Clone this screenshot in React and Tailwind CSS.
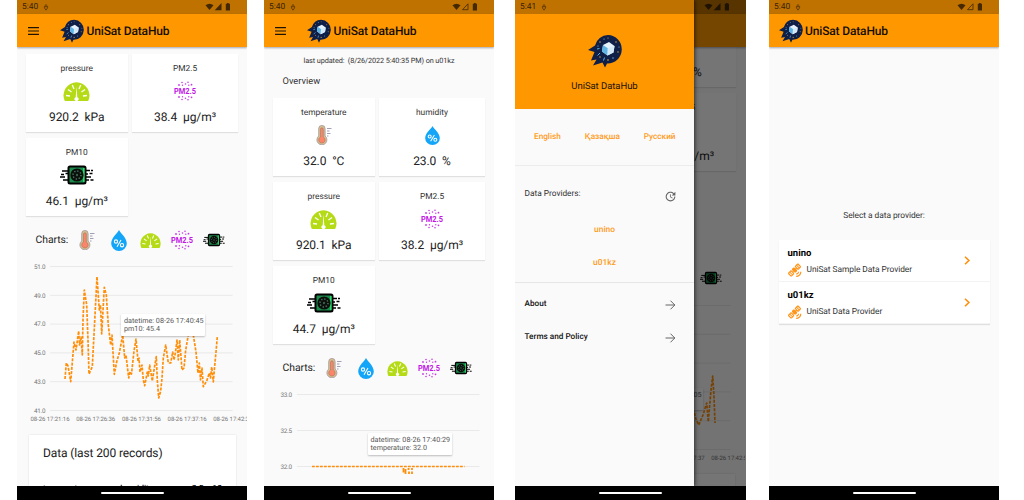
import React from "react";
import { MdUpdate, MdSatelliteAlt } from "react-icons/md";

function Logo({ className }) {
  return (
    <svg viewBox="0 0 34 34" className={className}>
      <path d="M20 1A14 14 0 1 1 19 29.500L17 33.500L14.500 28.500L5 31.500L8.500 25.500L3 26.500L6.500 18L0 16L7 11.500A14 14 0 0 1 20 1Z" fill="#0f1f47" />
      <path d="M15 11L21 8L26.500 12L25.500 18.500L19.500 21.500L14 17.500Z" fill="#e6f2fb" />
      <path d="M15 11L19.800 14.300L19.500 21.500L14 17.500Z" fill="#5fb4e6" />
      <path d="M19.800 14.300L26.500 12L25.500 18.500L19.500 21.500Z" fill="#d5e8f6" />
      <path d="M9.500 21.500L12 19M15.500 26.500L16.500 23.500M9 15L11.500 14.500" stroke="#53b5e8" strokeWidth="1" />
      <g fill="#e8b04a">
        <circle cx="12" cy="8" r=".7" /><circle cx="28" cy="8" r=".7" /><circle cx="30" cy="18" r=".7" />
        <circle cx="20" cy="26" r=".8" /><circle cx="12" cy="23" r=".7" /><circle cx="20" cy="4" r=".6" />
      </g>
      <g fill="#7cc4ee">
        <circle cx="16" cy="5" r=".6" /><circle cx="25" cy="24" r=".7" /><circle cx="31" cy="13" r=".6" /><circle cx="10" cy="12" r=".6" />
      </g>
    </svg>
  );
}

function Thermo({ className }) {
  return (
    <svg viewBox="0 0 16 20" className={className}>
      <path d="M2.700 11V3.600a3.200 3.200 0 0 1 6.400 0V11a5 5 0 1 1-6.400 0Z" fill="#d8c08c" stroke="#a396a0" strokeWidth=".8" />
      <path d="M4.500 12V4.200a1.400 1.400 0 0 1 2.800 0V12a3.200 3.200 0 1 1-2.800 0Z" fill="#fb8469" stroke="#8f7466" strokeWidth=".5" />
      <path d="M11 3.500h4.500M11 6h2.500M11 8.500h3.500M11 11h1.500" stroke="#8b86a6" strokeWidth=".8" />
    </svg>
  );
}

function Drop({ className }) {
  return (
    <svg viewBox="0 0 16 20" className={className} preserveAspectRatio="none">
      <path d="M8 0C9.500 3 15.800 7.500 15.800 12.800a7.800 7.200 0 0 1-15.600 0C.200 7.500 6.500 3 8 0Z" fill="#12a5f8" />
      <g fill="none" stroke="#fff" strokeWidth="1.100">
        <circle cx="5" cy="11" r="1.600" /><circle cx="11" cy="14.500" r="1.600" /><path d="M10 9.500L6 16" />
      </g>
    </svg>
  );
}

function Gauge({ className }) {
  return (
    <svg viewBox="0 0 27 19" className={className}>
      <path d="M1.800 19A13 13 0 1 1 25.200 19Q24.800 19 24 19H3Q2 19 1.800 19Z" fill="#b5db17" />
      <path d="M3 13.500l4 .5M5 7.500l3.500 2.500M9.300 3l1.700 4M24 13.500l-4 .5M22 7.500L18.500 10M17.700 3L16 7" stroke="#fff" strokeWidth="1.300" />
      <path d="M13.500 4.500L14.300 15.300A2 2 0 1 1 12.700 15.300Z" fill="#fff" />
    </svg>
  );
}

function Pm25({ className }) {
  return (
    <svg viewBox="0 0 22 20" className={className}>
      <text x="0" y="13" textLength="22" lengthAdjust="spacingAndGlyphs" fontFamily="Roboto, sans-serif" fontWeight="700" fontSize="8.500" fill="#c217e6">PM2.5</text>
      <g fill="#c63be8">
        <circle cx="5" cy="4" r=".9" /><circle cx="8" cy="1.500" r=".8" /><circle cx="8.500" cy="4.300" r=".7" /><circle cx="11.500" cy="3" r=".8" />
        <circle cx="14" cy="1.300" r=".8" /><circle cx="14.800" cy="4.300" r=".7" /><circle cx="17.500" cy="3.700" r=".9" />
        <circle cx="5" cy="16" r=".9" /><circle cx="8" cy="18.500" r=".8" /><circle cx="8.500" cy="15.700" r=".7" /><circle cx="11.500" cy="17.200" r=".8" />
        <circle cx="14" cy="18.700" r=".8" /><circle cx="14.800" cy="15.700" r=".7" /><circle cx="17.500" cy="16.300" r=".9" />
      </g>
    </svg>
  );
}

function Pm10({ className }) {
  return (
    <svg viewBox="0 0 34 20" className={className}>
      <path d="M2 6h6M1 9.500h3M5.500 8.500h3M0 12h5M3 15h5M26 5.500h4M31 5.500h2M25 9h3M29.500 8.500h3M26 12h5M26 15h3M30.500 15h3" stroke="#000" strokeWidth="1.500" />
      <rect x="8.500" y="1.500" width="17" height="17" rx="1.500" fill="#1c8a4a" stroke="#000" strokeWidth="2" />
      <path d="M23.800 3v14" stroke="#27e070" strokeWidth="1.500" />
      <circle cx="17" cy="10" r="6.600" fill="#0a0f0c" />
      <circle cx="17" cy="10" r="4" fill="none" stroke="#4f7460" strokeWidth="1.400" strokeDasharray="1.300 1.800" />
      <circle cx="17" cy="10" r="1.200" fill="#3c5a48" />
    </svg>
  );
}

function StatusBar({ time, outlined }) {
  return (
    <div className="flex h-[14px] shrink-0 items-center bg-[#bf7200] pr-[15px] pl-[5px] text-[#3b2300]">
      {time && <span className="pt-px text-[8.400px] leading-[13px]">{time}</span>}
      {time && (
        <svg viewBox="0 0 6 8" className="mt-px ml-[5px] h-[7px] w-[6px]" fill="none" stroke="#5f3900" strokeWidth="1">
          <path d="M3 0v4M1.200 2.500h3.600v2L3 7L1.200 4.500Z" />
        </svg>
      )}
      <svg viewBox="0 0 27 10" className="ml-auto h-[10px] w-[27px]">
        <path d="M.5 3.200Q4.500 .200 8.500 3.200L4.500 8Z" fill="#442800" />
        {outlined ? (
          <path d="M16 1.800V7.700H10.500Z" fill="none" stroke="#442800" strokeWidth=".8" />
        ) : (
          <path d="M16.500 1V8.200H9.700Z" fill="#442800" />
        )}
        <path d="M20.800 1.800h1.200V1h1.700v.8H25V8.500H20.800Z" fill="#442800" />
      </svg>
    </div>
  );
}

function AppBar({ menu, bare }) {
  return (
    <div className="relative z-10 flex h-[33px] shrink-0 items-center bg-[#ff9800] pl-[9.500px] shadow-[0_1px_2px_rgba(0,0,40,0.35)]">
      {menu && (
        <svg viewBox="0 0 11 8" className="mr-[21.500px] ml-[1px] h-[8px] w-[11px]" stroke="#1f1300" strokeWidth="1.200">
          <path d="M0 .7H11M0 4H11M0 7.300H11" />
        </svg>
      )}
      {!bare && <Logo className="h-[24px] w-[24px]" />}
      {!bare && <span className="ml-[2.500px] text-[12px] font-medium tracking-[-0.150px] text-[#140d00]">UniSat DataHub</span>}
    </div>
  );
}

function NavBar() {
  return (
    <div className="relative z-30 flex h-[14px] shrink-0 items-center justify-center bg-black">
      <div className="h-[2px] w-[63px] rounded-full bg-white" />
    </div>
  );
}

function Card({ label, value, icon, iconSize }) {
  const Icon = icon;
  return (
    <div className="flex h-[78px] flex-col items-center bg-white pt-[8px] shadow-[0_1px_1px_rgba(0,0,0,0.1)]">
      <div className="h-[14px] text-[8.400px] leading-[14px] text-[#333]">{label}</div>
      <div className="-mt-px flex h-[32px] items-center">
        <Icon className={iconSize} />
      </div>
      <div className="mt-[2px] h-[16px] text-[12px] leading-[16px] tracking-[-0.070px] whitespace-pre text-[#222]">{value}</div>
    </div>
  );
}

const SENSOR = {
  temperature: { label: "temperature", icon: Thermo, iconSize: "h-[20px] w-[16px]" },
  humidity: { label: "humidity", icon: Drop, iconSize: "h-[19px] w-[15px]" },
  pressure: { label: "pressure", icon: Gauge, iconSize: "h-[19px] w-[27px]" },
  pm25: { label: "PM2.5", icon: Pm25, iconSize: "h-[20px] w-[22px]" },
  pm10: { label: "PM10", icon: Pm10, iconSize: "h-[20px] w-[34px]" },
};

function Cards({ items }) {
  return (
    <div className="ml-[9px] grid auto-rows-[78px] grid-cols-[101.500px_106px] gap-x-[4.500px] gap-y-[6px]">
      {items.map(([key, value], i) =>
        key ? <Card key={key} {...SENSOR[key]} value={value} /> : <div key={i} />
      )}
    </div>
  );
}

function ChartPicker() {
  return (
    <div className="mt-[12px] flex h-[24px] items-center pl-[18.500px]">
      <span className="w-[41.500px] text-[10.400px] tracking-[-0.050px] text-[#222]">Charts:</span>
      <div className="flex w-[20px] justify-center"><Thermo className="h-[20px] w-[16px]" /></div>
      <div className="ml-[12px] flex w-[20px] justify-center"><Drop className="h-[21px] w-[16px]" /></div>
      <div className="ml-[11px] flex w-[21px] justify-center"><Gauge className="h-[15px] w-[21px]" /></div>
      <div className="ml-[9.500px] flex w-[22px] justify-center"><Pm25 className="h-[20px] w-[22px]" /></div>
      <div className="ml-[10px] flex w-[22px] justify-center"><Pm10 className="h-[14px] w-[22px]" /></div>
    </div>
  );
}

function Tip({ className, lines }) {
  return (
    <div className={`absolute flex flex-col justify-center rounded-[1px] bg-white pl-[3px] text-[7.200px] leading-[8px] whitespace-nowrap text-[#555] shadow-[0_1px_2px_rgba(0,0,0,0.25)] ${className}`}>
      {lines.map((l) => <div key={l}>{l}</div>)}
    </div>
  );
}

const PM10_LINE =
  "65,379 66.3,363 68,366 70.700,381.700 72.500,360 74,342 76,350 78.700,331 79.500,345 81,337 82.300,355 83,320 84.300,290 86.700,305 88,340 89,374 92.300,366.700 94.500,325 97,276.700 99.300,310 100.500,305 101.700,334 104.300,287.300 106.300,295 108.300,325 110.700,345 112,335 114.300,374.300 116.700,361.700 119.300,353 122.700,335 124.700,358 126,355 128.700,378 130,371.700 131.500,374 134,351 136,339 138,361 139,358 140,372 142,365 143.300,380 144.700,385.700 147.300,372 148.300,376 149.700,365 152.300,381 154,370 156.300,356.700 157.300,380 158.700,398 160.700,391 162,378 163.300,358 165.700,345 168.300,363 170.700,363 172.700,352 174,360 175.500,352 177,340 178.300,360 179.700,340 182,370 184,368 185.700,350 188.300,335 190.700,323 193.300,335 196,352 198,373 199.300,363 200.500,380 202,368 203.300,386.700 206.700,381 209.300,373 210.500,378 211.700,367 213.300,382 214.500,368 216,352 217.300,337";

const PM10_LINE_B =
  "65,372 75,345 85,320 95,290 110,350 125,370 140,360 155,385 170,352 185,368 192,376 196,372.700 198,380 200.700,386 205,376 208.700,364 210.300,382.700 213,351 214.700,337 216,358 217,384";

function Pm10Chart({ line, levels, stamps, firstStamp = 0, tip, tipClass }) {
  return (
    <div className="relative h-[164px]">
      <svg viewBox="17 260 230 164" className="h-[164px] w-[230px]" fontFamily="Roboto, sans-serif" fill="#777">
        {[0, 1, 2, 3, 4, 5].map((i) => (
          <g key={i}>
            <line x1="50" x2="232.500" y1={266.5 + i * 28.8} y2={266.5 + i * 28.8} stroke="#e9e9e9" strokeWidth="1" />
            {levels && <text x="34" y={268.8 + i * 28.8} fontSize="6.300" textLength="11.500">{levels[i]}</text>}
          </g>
        ))}
        <polyline points={line} fill="none" stroke="#ff8f0a" strokeWidth="1.700" strokeDasharray="3 1.300" strokeLinejoin="round" />
        {stamps.map((t, i) => (
          <text key={t} x={30.5 + (i + firstStamp) * 45.7} y="421" fontSize="6" textLength="39">{t}</text>
        ))}
      </svg>
      <Tip className={tipClass} lines={tip} />
    </div>
  );
}

function DataCard({ empty }) {
  return (
    <div className="mt-[10.500px] mr-[11px] ml-[12px] h-[90px] bg-white px-[14px] pt-[10.500px] shadow-[0_0_1.500px_rgba(0,0,0,0.15)]">
      {!empty && (
        <>
          <div className="text-[12px] leading-[17px] tracking-[-0.120px] text-[#222]">Data (last 200 records)</div>
          <div className="mt-[20.500px] flex text-[8.500px] leading-[12px] font-medium whitespace-nowrap text-black">
            <span className="w-[82px]">temperature</span>
            <span className="w-[76px]">humidity</span>
            <span className="w-[22px]">2.5</span>
            <span>10</span>
          </div>
        </>
      )}
    </div>
  );
}

function Phone({ children, className }) {
  return <div className={`relative flex h-[500px] shrink-0 flex-col overflow-hidden bg-[#fafafa] ${className}`}>{children}</div>;
}

function PhoneReadings() {
  return (
    <Phone className="w-[230px]">
      <StatusBar time="5:40" />
      <AppBar menu />
      <div className="min-h-0 flex-1 overflow-hidden pt-[7px]">
        <Cards items={[["pressure", "920.2  kPa"], ["pm25", "38.4  μg/m³"], ["pm10", "46.1  μg/m³"]]} />
        <ChartPicker />
        <div className="mt-[8px]">
          <Pm10Chart
            line={PM10_LINE}
            levels={["51.0", "49.0", "47.0", "45.0", "43.0", "41.0"]}
            stamps={["08-26 17:21:16", "08-26 17:26:36", "08-26 17:31:56", "08-26 17:37:16", "08-26 17:42:36"]}
            tip={["datetime: 08-26 17:40:45", "pm10: 45.4"]}
            tipClass="left-[104px] top-[54px] h-[22px] w-[84px]"
          />
        </div>
        <DataCard />
      </div>
      <NavBar />
    </Phone>
  );
}

function PhoneOverview() {
  return (
    <Phone className="ml-[17px] w-[230px]">
      <StatusBar time="5:40" outlined />
      <AppBar menu />
      <div className="min-h-0 flex-1 overflow-hidden pt-[7px]">
        <div className="text-center text-[7.300px] leading-[13px] tracking-[-0.100px] whitespace-pre text-[#333]">last updated:  (8/26/2022 5:40:35 PM) on u01kz</div>
        <div className="mt-[8px] mb-[9px] pl-[18.500px] text-[9.300px] leading-[14px] text-[#333]">Overview</div>
        <Cards
          items={[
            ["temperature", "32.0  °C"],
            ["humidity", "23.0  %"],
            ["pressure", "920.1  kPa"],
            ["pm25", "38.2  μg/m³"],
            ["pm10", "44.7  μg/m³"],
          ]}
        />
        <ChartPicker />
        <div className="relative mt-[6px]">
          <svg viewBox="264 386 230 100" className="h-[100px] w-[230px]" fontFamily="Roboto, sans-serif" fill="#777">
            {["33.0", "32.5", "32.0"].map((t, i) => (
              <g key={t}>
                <line x1="297" x2="479.500" y1={394.5 + i * 36} y2={394.5 + i * 36} stroke="#e9e9e9" strokeWidth="1" />
                <text x="280.500" y={396.8 + i * 36} fontSize="6.300" textLength="11.500">{t}</text>
              </g>
            ))}
            <path d="M312 466.500H464.500" stroke="#ff8f0a" strokeWidth="1.500" strokeDasharray="2.800 1.200" />
            <path d="M403.500 468V472.500M405.500 469V474M408.500 468V470M409 471.500V474M412 468V470M412 471.500V474" stroke="#ff8f0a" strokeWidth="1.800" />
          </svg>
          <Tip className="top-[47px] left-[103.500px] h-[22px] w-[84px]" lines={["datetime: 08-26 17:40:29", "temperature: 32.0"]} />
        </div>
      </div>
      <NavBar />
    </Phone>
  );
}

function Arrow() {
  return (
    <svg viewBox="0 0 11 10" className="h-[10px] w-[11px]" fill="none" stroke="#555" strokeWidth=".9">
      <path d="M.5 5H9.700M5.500 .7L9.800 5L5.500 9.300" />
    </svg>
  );
}

function PhoneDrawer() {
  return (
    <Phone className="ml-[21px] w-[231px]">
      <StatusBar />
      <AppBar bare />
      <div className="min-h-0 flex-1 overflow-hidden">
        <div className="-mt-[38px]">
          <Cards
            items={[
              [null],
              ["humidity", "23.0  %"],
              [null],
              ["pm25", "38.2  μg/m³"],
            ]}
          />
          <div className="mt-[95px] flex h-[24px] items-center pl-[185px]">
            <Pm10 className="h-[14px] w-[22px]" />
          </div>
          <div className="mt-[9px]">
            <Pm10Chart
              line={PM10_LINE_B}
              stamps={["08-26 17:37:37", "08-26 17:42:57"]}
              firstStamp={3}
              tip={["datetime: 08-26 17:41:05"]}
              tipClass="left-[104px] top-[89px] h-[22px] w-[84px] pb-[8px]"
            />
          </div>
          <DataCard empty />
        </div>
      </div>
      <NavBar />
      <div className="absolute inset-x-0 top-0 bottom-[14px] z-10 bg-black/54" />
      <div className="absolute top-0 bottom-[14px] left-0 z-20 flex w-[179px] flex-col bg-[#fafafa] shadow-[1px_0_4px_rgba(0,0,0,0.6)]">
        <div className="h-[14px] overflow-hidden bg-[#bf7200]">
          <div className="w-[231px]"><StatusBar time="5:41" /></div>
        </div>
        <div className="flex h-[95px] flex-col items-center bg-[#ff9800] pt-[20px]">
          <Logo className="h-[34px] w-[34px]" />
          <div className="mt-[12px] text-[9.500px] leading-[14px] tracking-[-0.050px] text-[#1c1200]">UniSat DataHub</div>
        </div>
        <div className="flex h-[57px] items-center justify-between border-b border-[#ececec] pt-px pr-[18.500px] pl-[19px] text-[8.200px] font-medium text-[#ff9a1a]">
          <span>English</span>
          <span>Қазақша</span>
          <span>Русский</span>
        </div>
        <div className="flex h-[117px] flex-col border-b border-[#e6e6e6]">
          <div className="mt-[21px] flex h-[18px] items-center justify-between pr-[17.500px] pl-[9.500px] text-[8.300px] text-[#333]">
            <span className="-mt-[3px]">Data Providers:</span>
            <MdUpdate className="-scale-y-100 scale-x-100 rotate-0 h-[13px] w-[13px] text-[#666] scale-y-100" />
          </div>
          <div className="mt-[18px] text-center text-[8.400px] leading-[14px] font-medium text-[#ff9a1a]">unino</div>
          <div className="mt-[19px] text-center text-[8.400px] leading-[14px] font-medium text-[#ff9a1a]">u01kz</div>
        </div>
        <div className="mt-[5px] flex h-[33px] items-center justify-between pr-[18px] pl-[9.500px] text-[8.200px] font-medium text-[#111]">
          <span>About</span>
          <Arrow />
        </div>
        <div className="flex h-[33px] items-center justify-between pr-[18px] pl-[9.500px] text-[8.200px] font-medium text-[#111]">
          <span>Terms and Policy</span>
          <Arrow />
        </div>
      </div>
    </Phone>
  );
}

function Provider({ name, text }) {
  return (
    <div className="flex h-[42px] items-center justify-between border-b border-[#f3f3f3] pr-[20px] pl-[9px]">
      <div className="pt-[4px]">
        <div className="text-[9.500px] leading-[13px] font-bold text-black">{name}</div>
        <div className="mt-[3px] flex h-[16px] items-center gap-[5px] text-[8.400px] tracking-[-0.050px] text-[#333]">
          <MdSatelliteAlt className="h-[15px] w-[14px] text-[#ff9418]" />
          <span>{text}</span>
        </div>
      </div>
      <svg viewBox="0 0 6 9" className="h-[9px] w-[6px]" fill="none" stroke="#ff8f0a" strokeWidth="1.600">
        <path d="M1 .7L4.900 4.500L1 8.300" />
      </svg>
    </div>
  );
}

function PhoneProviders() {
  return (
    <Phone className="ml-[23px] w-[230px]">
      <StatusBar time="5:40" outlined />
      <AppBar />
      <div className="min-h-0 flex-1">
        <div className="pt-[162px] text-center text-[8.400px] leading-[14px] tracking-[-0.050px] text-[#333]">Select a data provider:</div>
        <div className="mt-[17px] mr-[9px] ml-[9.500px] bg-white shadow-[0_1px_1px_rgba(0,0,0,0.1)]">
          <Provider name="unino" text="UniSat Sample Data Provider" />
          <Provider name="u01kz" text="UniSat Data Provider" />
        </div>
      </div>
      <NavBar />
    </Phone>
  );
}

export default function App() {
  return (
    <div className="flex h-[500px] w-[1024px] overflow-hidden bg-white pl-[17px] font-[Roboto,sans-serif] [text-rendering:geometricPrecision]">
      <PhoneReadings />
      <PhoneOverview />
      <PhoneDrawer />
      <PhoneProviders />
    </div>
  );
}
